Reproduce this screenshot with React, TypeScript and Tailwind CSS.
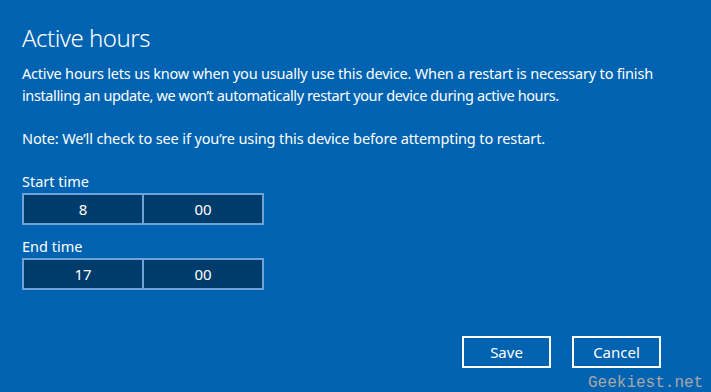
import React from "react";

function TimeBox({ h, m }: { h: string; m: string }) {
  return (
    <div className="flex w-[242px] h-[32px] border-2 border-[#6fa2d6] bg-[#003c6b] text-white text-[15px]">
      <div className="flex-1 flex items-center justify-center border-r-2 border-[#6fa2d6]">{h}</div>
      <div className="flex-1 flex items-center justify-center">{m}</div>
    </div>
  );
}

export default function App() {
  return (
    <div
      className="w-[711px] h-[392px] bg-[#0063b1] text-white relative overflow-hidden"
      style={{ fontFamily: '"Noto Sans", "Open Sans", sans-serif' }}
    >
      <div className="pl-[22px] pt-[22px]">
        <div className="text-[24px] leading-[32px] font-light tracking-[-0.5px]">Active hours</div>
        <div className="mt-[8px] text-[14.5px] leading-[22px]">
          <p className="tracking-[-0.2px]">
            Active hours lets us know when you usually use this device. When a restart is necessary to finish
          </p>
          <p className="tracking-[-0.38px]">
            installing an update, we won’t automatically restart your device during active hours.
          </p>
          <p className="mt-[21px] tracking-[-0.12px]">Note: We’ll check to see if you’re using this device before attempting to restart.</p>
        </div>
        <div className="mt-[22px] text-[14.5px] leading-[20px]">Start time</div>
        <div className="mt-[2px]">
          <TimeBox h="8" m="00" />
        </div>
        <div className="mt-[11px] text-[14.5px] leading-[20px]">End time</div>
        <div className="mt-[2px]">
          <TimeBox h="17" m="00" />
        </div>
      </div>
      <div className="absolute left-[462px] top-[336px] flex gap-[21px]">
        <button className="w-[89px] h-[32px] border-2 border-white text-[15px] text-white flex items-center justify-center">Save</button>
        <button className="w-[89px] h-[32px] border-2 border-white text-[15px] text-white flex items-center justify-center">Cancel</button>
      </div>
      <div
        className="absolute left-[588px] top-[373px] text-[16px] leading-[20px] text-[#a8a8a8]"
        style={{ fontFamily: '"Liberation Mono", monospace' }}
      >
        Geekiest.net
      </div>
    </div>
  );
}
